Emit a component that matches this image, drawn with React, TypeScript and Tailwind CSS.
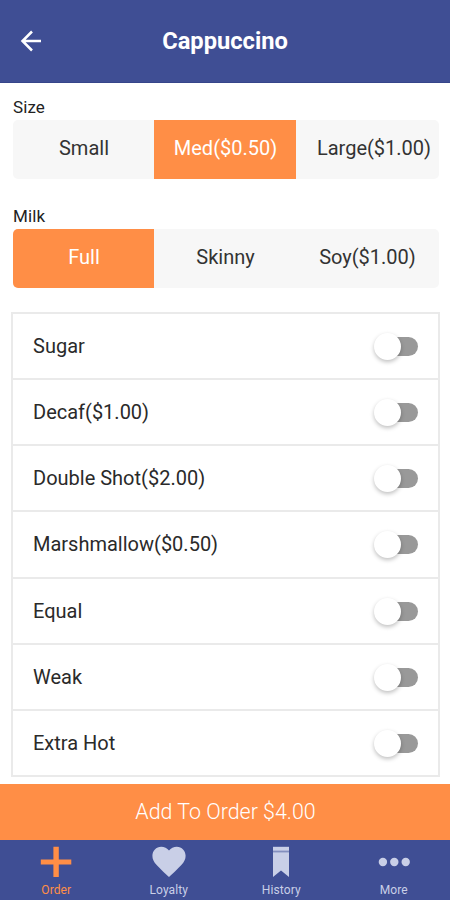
import { useState } from "react";

interface SegmentProps {
  label: string;
  options: string[];
  selected: number;
  onSelect: (index: number) => void;
}

function Segment({ label, options, selected, onSelect }: SegmentProps) {
  return (
    <div>
      <h3 className="h-[25px] text-[17px] leading-[25px] tracking-[0.1px] text-[#222222]">{label}</h3>
      <div className="flex h-[59px] w-[426px] overflow-hidden rounded-[5px] bg-[#f7f7f7]">
        {options.map((option, i) => (
          <button
            key={option}
            onClick={() => onSelect(i)}
            className={`pb-1 text-xl whitespace-nowrap ${i === 0 ? "w-[141px]" : "w-[142px]"} ${
              option.length > 10 ? "pl-3.5" : "pl-px"
            } ${i === selected ? "bg-[#ff8e46] text-white" : "text-[#333333]"} ${
              option.startsWith("Med") ? "pl-1" : ""
            }`}
          >
            {option}
          </button>
        ))}
      </div>
    </div>
  );
}

interface ToggleRowProps {
  name: string;
  on: boolean;
  onToggle: () => void;
}

function ToggleRow({ name, on, onToggle }: ToggleRowProps) {
  return (
    <div className="flex flex-1 items-center justify-between border-b-2 border-[#eaeaea] px-5 last:border-b-0">
      <span className="text-xl text-[#2a2a2a]">{name}</span>
      <button
        onClick={onToggle}
        className={`relative mt-px h-[19px] w-[42px] rounded-full ${on ? "bg-[#ff8e46]" : "bg-[#999999]"}`}
      >
        <span
          className={`absolute -top-[4px] h-[27px] w-[27px] rounded-full bg-white shadow-[0_2px_4px_rgba(0,0,0,0.25)] ${
            on ? "left-[17px]" : "-left-[2px]"
          }`}
        ></span>
      </button>
    </div>
  );
}

function PlusIcon() {
  return (
    <svg width="32" height="32" viewBox="0 0 32 32" fill="currentColor">
      <path d="M13.4 0.7h5.4v12.7h12.5v5H18.8v12.7h-5.4V18.4H0.8v-5h12.6z" />
    </svg>
  );
}

function HeartIcon() {
  return (
    <svg width="34" height="32" viewBox="0 0 34 32" fill="currentColor">
      <path d="M17 31 C15.500 29.800 7.500 22.400 4.200 18.600 C1.700 15.700 0.400 13 0.400 9.700 C0.400 4.700 4.200 0.700 9.200 0.700 C12.300 0.700 15.200 2 17 4.500 C18.800 2 21.700 0.700 24.800 0.700 C29.800 0.700 33.600 4.700 33.600 9.700 C33.600 13 32.300 15.700 29.800 18.600 C26.500 22.400 18.500 29.800 17 31z" />
    </svg>
  );
}

function BookmarkIcon() {
  return (
    <svg width="18" height="32" viewBox="0 0 18 32" fill="currentColor">
      <path d="M1 0.800h16v4H1z" />
      <path d="M1 4.800h16v1.500H1z" opacity="0.500" />
      <path d="M1 6.300h16V31l-8-6.500L1 31z" />
    </svg>
  );
}

function DotsIcon() {
  return (
    <svg width="32" height="32" viewBox="0 0 32 32" fill="currentColor">
      <circle cx="4.900" cy="16" r="4.200" />
      <circle cx="16.300" cy="16" r="4.200" />
      <circle cx="27.700" cy="16" r="4.200" />
    </svg>
  );
}

const tabs = [
  { name: "Order", icon: <PlusIcon /> },
  { name: "Loyalty", icon: <HeartIcon /> },
  { name: "History", icon: <BookmarkIcon /> },
  { name: "More", icon: <DotsIcon /> },
];

const sizes = ["Small", "Med($0.50)", "Large($1.00)"];
const milks = ["Full", "Skinny", "Soy($1.00)"];
const extras = ["Sugar", "Decaf($1.00)", "Double Shot($2.00)", "Marshmallow($0.50)", "Equal", "Weak", "Extra Hot"];

function App() {
  const [size, setSize] = useState(1);
  const [milk, setMilk] = useState(0);
  const [chosen, setChosen] = useState<string[]>([]);

  const toggle = (name: string) =>
    setChosen(chosen.includes(name) ? chosen.filter((c) => c !== name) : [...chosen, name]);

  return (
    <div className="flex h-[900px] w-[450px] flex-col overflow-hidden bg-white font-['Roboto',sans-serif]">
      <header className="grid h-[83px] shrink-0 grid-cols-[60px_1fr_60px] items-center border-b border-[#36458a] bg-[#3f4e94] text-white">
        <svg className="ml-5" width="22" height="22" viewBox="0 0 22 22" fill="none" stroke="currentColor" strokeWidth="2.500">
          <path d="M21 11H2.500M12 1.500L2.500 11l9.500 9.500" />
        </svg>
        <h1 className="pt-0.5 text-center text-[23.7px] font-bold">Cappuccino</h1>
      </header>

      <main className="flex flex-1 flex-col pt-3 pl-[11px]">
        <div className="flex flex-col gap-[25px] pl-0.5">
          <Segment label="Size" options={sizes} selected={size} onSelect={setSize} />
          <Segment label="Milk" options={milks} selected={milk} onSelect={setMilk} />
        </div>
        <div className="mt-6 flex h-[465px] w-[429px] flex-col border-2 border-[#eaeaea]">
          {extras.map((name) => (
            <ToggleRow key={name} name={name} on={chosen.includes(name)} onToggle={() => toggle(name)} />
          ))}
        </div>
      </main>

      <button className="h-[56px] shrink-0 bg-[#ff8e46] pt-px pl-px text-[21.4px] font-light text-white">
        Add To Order $4.00
      </button>

      <nav className="grid h-[60px] shrink-0 grid-cols-4 bg-[#3f4e94] pt-1.5">
        {tabs.map((tab, i) => (
          <div key={tab.name} className={`flex flex-col items-center ${i === 0 ? "text-[#ff8e46]" : "text-[#c9cfe7]"}`}>
            {tab.icon}
            <span className="mt-1 text-xs leading-4 tracking-[0.1px]">{tab.name}</span>
          </div>
        ))}
      </nav>
    </div>
  );
}

export default App;
